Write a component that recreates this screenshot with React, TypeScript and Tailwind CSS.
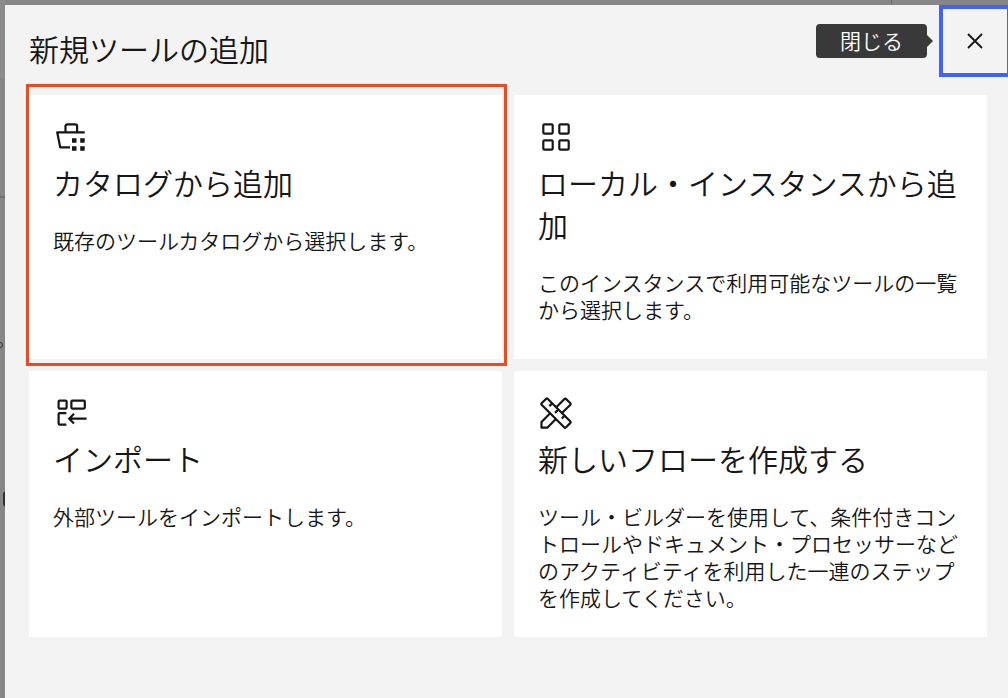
import type { ReactNode } from 'react';

const iconProps = {
  viewBox: '0 0 36 36',
  fill: 'none',
  stroke: 'currentColor',
  strokeWidth: 2.2,
  strokeLinejoin: 'round' as const,
  className: 'w-9 h-9 shrink-0',
  'aria-hidden': true,
};

function CatalogIcon() {
  return (
    <svg {...iconProps}>
      <path d="M12.5 13V7.3a2 2 0 0 1 2-2h7.6a2 2 0 0 1 2 2V13" />
      <path d="M31.7 13.3H4.2l3 15H17" />
      <path
        stroke="none"
        fill="currentColor"
        d="M19 19.2h4.5v4.5H19zM27.2 19.2h4.5v4.5h-4.5zM19 27.2h4.5v4.5H19zM27.2 27.2h4.5v4.5h-4.5z"
      />
    </svg>
  );
}

function GridIcon() {
  return (
    <svg {...iconProps}>
      <rect x="5.3" y="5.3" width="9.4" height="9.4" rx="1.2" />
      <rect x="21.3" y="5.3" width="9.4" height="9.4" rx="1.2" />
      <rect x="5.3" y="21.3" width="9.4" height="9.4" rx="1.2" />
      <rect x="21.3" y="21.3" width="9.4" height="9.4" rx="1.2" />
    </svg>
  );
}

function ImportIcon() {
  return (
    <svg {...iconProps}>
      <rect x="5.6" y="5.6" width="8" height="8" rx="1" />
      <rect x="18.4" y="5.6" width="13.4" height="8" rx="1" />
      <path d="M13.4 18.2H6.6a1 1 0 0 0-1 1v9.4a1 1 0 0 0 1 1h6.8" />
      <path strokeLinejoin="miter" d="M33.6 23.7H16.8M21 18.8l-4.8 4.9 4.8 4.9" />
    </svg>
  );
}

function RulerPencilIcon() {
  return (
    <svg {...iconProps}>
      <path d="M8.2 3.7 3.6 8.3a1 1 0 0 0 0 1.4l22.8 22.8a1 1 0 0 0 1.4 0l4.6-4.6a1 1 0 0 0 0-1.4L9.6 3.7a1 1 0 0 0-1.4 0z" />
      <path d="m14.2 8.3-2.8 2.8M20.4 14.5l-3.4 3.4M26.6 20.7l-2.8 2.8" />
      <path d="m18.5 12.1 8-8.2a1 1 0 0 1 1.4 0l4.5 4.4a1 1 0 0 1 0 1.4l-8.2 8.1" />
      <path d="M12.2 18.3 3.5 27v5.7h5.8l8.6-8.7" />
    </svg>
  );
}

function CloseIcon() {
  return (
    <svg viewBox="0 0 16 16" className="w-4 h-4" stroke="currentColor" strokeWidth="1.8" fill="none" aria-hidden>
      <path d="m1 1 14 14M15 1 1 15" />
    </svg>
  );
}

type Option = {
  icon: ReactNode;
  title: string;
  text: string;
  highlighted?: boolean;
};

const OPTIONS: Option[] = [
  {
    icon: <CatalogIcon />,
    title: 'カタログから追加',
    text: '既存のツールカタログから選択します。',
    highlighted: true,
  },
  {
    icon: <GridIcon />,
    title: 'ローカル・インスタンスから追加',
    text: 'このインスタンスで利用可能なツールの一覧から選択します。',
  },
  {
    icon: <ImportIcon />,
    title: 'インポート',
    text: '外部ツールをインポートします。',
  },
  {
    icon: <RulerPencilIcon />,
    title: '新しいフローを作成する',
    text: 'ツール・ビルダーを使用して、条件付きコントロールやドキュメント・プロセッサーなどのアクティビティを利用した一連のステップを作成してください。',
  },
];

function OptionTile({ icon, title, text, highlighted }: Option) {
  return (
    <button
      type="button"
      className="relative flex flex-col items-start min-h-[264px] px-6 pt-6 pb-[26px] bg-white text-left cursor-pointer"
    >
      {icon}
      <span className="mt-1.5 text-[30px] leading-[42px]">{title}</span>
      <span className="mt-6 text-[21px] leading-[27px]">{text}</span>
      {highlighted && (
        <span className="absolute -top-[11px] -bottom-[7px] -left-[3px] -right-[5px] border-3 border-[#ec4b21] pointer-events-none" />
      )}
    </button>
  );
}

export default function App() {
  return (
    <div
      lang="ja"
      className="relative flex min-h-screen pt-[5px] pl-[5px] overflow-hidden bg-[#868686] text-[#161616] font-[350] font-['Noto_Sans_CJK_JP',sans-serif]"
    >
      {/* Dimmed page behind the dialog */}
      <div className="absolute inset-0" aria-hidden>
        <div className="absolute left-0 top-0 w-[5px] h-[78px] bg-[#8b8b8b]" />
        <div className="absolute left-0 top-[196px] w-[5px] h-0.5 bg-[#727272]" />
        <div className="absolute -left-[3px] top-[342px] w-1.5 h-1.5 rounded-full border border-[#333333]" />
        <div className="absolute left-[3px] top-[491px] w-2 h-4 rounded-sm bg-[#303030]" />
        <div className="absolute left-[891px] top-0 w-px h-[5px] bg-[#6b6580]" />
      </div>

      <div role="dialog" aria-labelledby="dialog-title" className="relative flex-1 bg-[#f3f3f3]">
        <header className="flex items-start justify-between pl-6">
          <h2 id="dialog-title" className="pt-[22px] text-[30px] leading-[42px] font-[350]">
            新規ツールの追加
          </h2>
          <div className="flex items-center">
            <div id="close-tip" role="tooltip" className="flex items-center mr-1.5">
              <span className="px-6 pb-0.5 rounded-sm bg-[#393939] text-white text-[21px] leading-[32px]">閉じる</span>
              <svg viewBox="0 0 6 12" className="w-1.5 h-3" aria-hidden>
                <path d="M0 0l6 6-6 6z" fill="#393939" />
              </svg>
            </div>
            <button
              type="button"
              aria-label="閉じる"
              className="flex items-center justify-center w-[69px] h-[72px] border-4 border-r border-[#4262ff] cursor-pointer"
            >
              <CloseIcon />
            </button>
          </div>
        </header>

        <main className="grid grid-cols-2 gap-3 pt-[18px] pb-6 pl-6 pr-[21px]">
          {OPTIONS.map((option) => (
            <OptionTile key={option.title} {...option} />
          ))}
        </main>
      </div>
    </div>
  );
}
